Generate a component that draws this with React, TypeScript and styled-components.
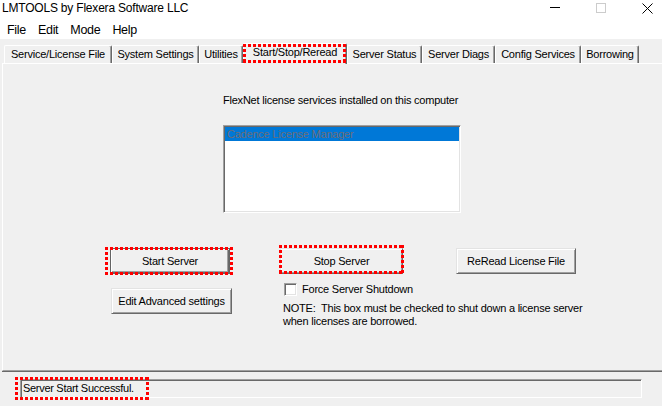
import React from "react";
import styled, { createGlobalStyle } from "styled-components";

const GlobalStyle = createGlobalStyle`
  html, body { margin: 0; padding: 0; background: #f0f0f0; }
  body { font-family: "Liberation Sans", Arial, sans-serif; color: #000; }
  * { box-sizing: border-box; }
`;

const LS = "-0.22px";

const Window = styled.div`
  width: 662px;
  height: 406px;
  overflow: hidden;
  display: flex;
  flex-direction: column;
  background: #f0f0f0;
`;

const TitleBar = styled.div`
  height: 17px;
  background: #fff;
  display: flex;
  justify-content: space-between;
  align-items: flex-start;
`;

const Title = styled.div`
  font-size: 12px;
  line-height: 14px;
  padding: 1px 0 0 2px;
  letter-spacing: -0.2px;
  white-space: nowrap;
`;

const Captions = styled.div`
  display: flex;
  margin-right: -8px;
`;

const CaptionButton = styled.div`
  width: 46px;
  height: 16px;
  display: flex;
  align-items: center;
  justify-content: center;
`;

const MenuBar = styled.div`
  height: 22px;
  background: #fff;
  display: flex;
  padding: 6px 0 0 1px;
`;

const MenuItem = styled.span`
  font-size: 12.5px;
  line-height: 15px;
  padding: 0 6px;
  letter-spacing: -0.3px;
`;

const Body = styled.div`
  flex: 1;
  display: flex;
  flex-direction: column;
  padding: 4px 0 0 2px;
`;

const TabStrip = styled.div`
  display: flex;
  align-items: flex-end;
  height: 20px;
  padding-left: 2px;
  position: relative;
  z-index: 1;
`;

const Tab = styled.div<{ $w: number; $active?: boolean }>`
  position: relative;
  flex: none;
  width: ${(p) => p.$w}px;
  height: ${(p) => (p.$active ? 21 : 18)}px;
  margin-bottom: ${(p) => (p.$active ? -1 : 0)}px;
  padding-bottom: ${(p) => (p.$active ? 3 : 0)}px;
  background: #f0f0f0;
  border-top: 1px solid #fff;
  border-left: 1px solid #fff;
  border-right: 1px solid #696969;
  box-shadow: inset -1px 0 0 #a0a0a0;
  border-radius: 2px 2px 0 0;
  display: flex;
  align-items: center;
  justify-content: center;
  font-size: 11px;
  line-height: 13px;
  letter-spacing: ${LS};
  white-space: nowrap;
`;

const Panel = styled.div`
  width: 664px;
  height: 308px;
  flex: none;
  border-top: 1px solid #fff;
  border-left: 1px solid #fff;
  border-bottom: 1px solid #a0a0a0;
  box-shadow: 0 1px 0 #696969;
  display: flex;
  flex-direction: column;
  align-items: flex-start;
  padding-top: 30px;
`;

const Text = styled.div`
  font-size: 11px;
  line-height: 13px;
  letter-spacing: ${LS};
  white-space: nowrap;
`;

const ServicesLabel = styled(Text)`
  margin-left: 220px;
`;

const ListBox = styled.div`
  margin: 18px 0 0 220px;
  width: 238px;
  height: 88px;
  background: #fff;
  border: 1px solid;
  border-color: #a0a0a0 #fff #fff #a0a0a0;
  box-shadow: inset 1px 1px 0 #696969, inset -1px -1px 0 #e3e3e3;
  padding: 1px;
`;

const ListRow = styled.div<{ $selected?: boolean }>`
  height: 14px;
  background: ${(p) => (p.$selected ? "#0078d7" : "transparent")};
  color: #6d6d78;
  font-size: 11px;
  line-height: 14px;
  letter-spacing: ${LS};
  padding-left: 2px;
  white-space: nowrap;
`;

const Controls = styled.div`
  display: grid;
  grid-template-columns: 170px 176px 121px;
  align-items: start;
  margin-top: 35px;
  padding-left: 107px;
`;

const Column = styled.div`
  display: flex;
  flex-direction: column;
  align-items: flex-start;
`;

const Wrap = styled.div`
  position: relative;
`;

const Button = styled.button<{ $w: number; $default?: boolean; $indent?: number }>`
  width: ${(p) => p.$w}px;
  height: 26px;
  margin: 0 0 0 ${(p) => p.$indent ?? 0}px;
  padding: 0;
  font-family: "Liberation Sans", Arial, sans-serif;
  font-size: 11px;
  letter-spacing: ${LS};
  color: #000;
  background: #f0f0f0;
  border: 1px solid;
  border-color: ${(p) =>
    p.$default ? "#646464" : "#e3e3e3 #696969 #696969 #e3e3e3"};
  box-shadow: ${(p) =>
    p.$default
      ? "inset 1px 1px 0 #fff, inset -1px -1px 0 #696969, inset -2px -2px 0 #a0a0a0"
      : "inset 1px 1px 0 #fff, inset -1px -1px 0 #a0a0a0"};
  white-space: nowrap;
`;

const SecondButtonRow = styled.div`
  margin-top: 14px;
`;

const CheckRow = styled.label`
  display: flex;
  align-items: center;
  gap: 5px;
  margin: 9px 0 0 4px;
`;

const CheckBox = styled.span`
  width: 13px;
  height: 13px;
  flex: none;
  background: #fff;
  border: 1px solid;
  border-color: #a0a0a0 #fff #fff #a0a0a0;
  box-shadow: inset 1px 1px 0 #696969, inset -1px -1px 0 #e3e3e3;
`;

const Note = styled(Text)`
  margin: 6px 0 0 3px;
  white-space: pre;
`;

const StatusArea = styled.div`
  padding: 8px 0 0 18px;
`;

const StatusBox = styled.div`
  width: 622px;
  height: 19px;
  border: 1px solid;
  border-color: #a0a0a0 #fff #fff #a0a0a0;
  box-shadow: inset 1px 1px 0 #696969;
  display: flex;
  align-items: center;
  padding-left: 2px;
`;

const StatusText = styled.span`
  position: relative;
  font-size: 11px;
  line-height: 13px;
  letter-spacing: -0.3px;
  white-space: nowrap;
`;

const dotsH = "repeating-linear-gradient(90deg, #f00 0 3px, transparent 3px 5px)";
const dotsV = "repeating-linear-gradient(180deg, #f00 0 3px, transparent 3px 5px)";

const Highlight = styled.span<{ $t: number; $r: number; $b: number; $l: number }>`
  position: absolute;
  top: ${(p) => -p.$t}px;
  right: ${(p) => -p.$r}px;
  bottom: ${(p) => -p.$b}px;
  left: ${(p) => -p.$l}px;
  pointer-events: none;
  z-index: 5;
  background:
    ${dotsH} top left / 100% 3px no-repeat,
    ${dotsH} bottom left / 100% 3px no-repeat,
    ${dotsV} top left / 3px 100% no-repeat,
    ${dotsV} top right / 3px 100% no-repeat;
`;

const tabs: { label: string; w: number; active?: boolean }[] = [
  { label: "Service/License File", w: 108 },
  { label: "System Settings", w: 87 },
  { label: "Utilities", w: 44 },
  { label: "Start/Stop/Reread", w: 104, active: true },
  { label: "Server Status", w: 75 },
  { label: "Server Diags", w: 73 },
  { label: "Config Services", w: 86 },
  { label: "Borrowing", w: 58 },
];

const MinIcon = () => (
  <svg width="10" height="10" viewBox="0 0 10 10" shapeRendering="crispEdges">
    <line x1="0" y1="4.5" x2="10" y2="4.5" stroke="#000" strokeWidth="1" />
  </svg>
);

const MaxIcon = () => (
  <svg width="10" height="10" viewBox="0 0 10 10" shapeRendering="crispEdges">
    <rect x="0.5" y="0.5" width="9" height="9" fill="none" stroke="#cccccc" strokeWidth="1" />
  </svg>
);

const CloseIcon = () => (
  <svg width="11" height="11" viewBox="0 0 11 11">
    <line x1="0.5" y1="0.5" x2="10.5" y2="10.5" stroke="#000" strokeWidth="1" />
    <line x1="10.5" y1="0.5" x2="0.5" y2="10.5" stroke="#000" strokeWidth="1" />
  </svg>
);

export default function App() {
  return (
    <>
      <GlobalStyle />
      <Window>
        <TitleBar>
          <Title>LMTOOLS by Flexera Software LLC</Title>
          <Captions>
            <CaptionButton>
              <MinIcon />
            </CaptionButton>
            <CaptionButton>
              <MaxIcon />
            </CaptionButton>
            <CaptionButton>
              <CloseIcon />
            </CaptionButton>
          </Captions>
        </TitleBar>
        <MenuBar>
          <MenuItem>File</MenuItem>
          <MenuItem>Edit</MenuItem>
          <MenuItem>Mode</MenuItem>
          <MenuItem>Help</MenuItem>
        </MenuBar>
        <Body>
          <TabStrip>
            {tabs.map((t) => (
              <Tab key={t.label} $w={t.w} $active={t.active}>
                {t.label}
                {t.active && <Highlight $t={0} $r={0} $b={-1} $l={1} />}
              </Tab>
            ))}
          </TabStrip>
          <Panel>
            <ServicesLabel>FlexNet license services installed on this computer</ServicesLabel>
            <ListBox>
              <ListRow $selected>Cadence License Manager</ListRow>
            </ListBox>
            <Controls>
              <Column>
                <Wrap>
                  <Button $w={120} $default>
                    Start Server
                  </Button>
                  <Highlight $t={1} $r={3} $b={1} $l={5} />
                </Wrap>
                <SecondButtonRow>
                  <Button $w={121} $indent={1}>
                    Edit Advanced settings
                  </Button>
                </SecondButtonRow>
              </Column>
              <Column>
                <Wrap>
                  <Button $w={123}>Stop Server</Button>
                  <Highlight $t={3} $r={1} $b={0} $l={1} />
                </Wrap>
                <CheckRow>
                  <CheckBox />
                  <Text>Force Server Shutdown</Text>
                </CheckRow>
                <Note>{"NOTE:  This box must be checked to shut down a license server\nwhen licenses are borrowed."}</Note>
              </Column>
              <Column>
                <Button $w={120}>ReRead License File</Button>
              </Column>
            </Controls>
          </Panel>
          <StatusArea>
            <StatusBox>
              <StatusText>
                Server Start Successful.
                <Highlight $t={5} $r={15} $b={5} $l={8} />
              </StatusText>
            </StatusBox>
          </StatusArea>
        </Body>
      </Window>
    </>
  );
}
